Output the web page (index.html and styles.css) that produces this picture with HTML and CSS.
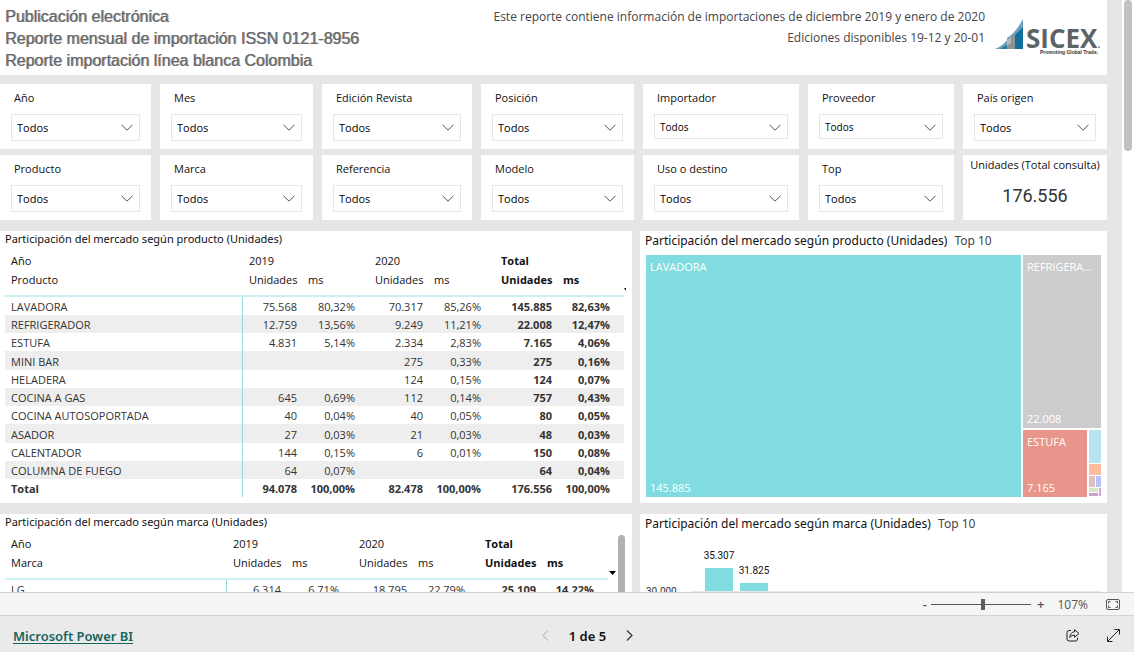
FILE: index.html
```html
<!DOCTYPE html>
<html lang="es">
<head>
<meta charset="utf-8">
<title>Reporte importación línea blanca Colombia</title>
<link rel="stylesheet" href="styles.css">
</head>
<body>
<svg class="defs" aria-hidden="true">
  <symbol id="chevron" viewBox="0 0 12 7"><path d="M0.5 0.8 6 6.2 11.5 0.8" fill="none" stroke="#555" stroke-width="1"/></symbol>
</svg>
<main class="viewport">
  <div class="report">
    <header class="head">
      <h1 class="head-title">Publicación electrónica<br>Reporte mensual de importación ISSN 0121-8956<br>Reporte importación línea blanca Colombia</h1>
      <p class="head-note">Este reporte contiene información de importaciones de diciembre 2019 y enero de 2020<br>Ediciones disponibles 19-12 y 20-01</p>
      <svg class="logo" viewBox="0 0 106 38" role="img" aria-label="SICEX Promoting Global Trade">
        <path d="M0 30 C5 28 9 25 13 20 V30Z" fill="#6f9cbf"/>
        <path d="M5 30 L13 25 V30Z" fill="#2b7aa2"/>
        <path d="M12 30 V19 C18 15 24 8 28 0 V30Z" fill="#6f9cbf"/>
        <path d="M12 21 L20 16 V30 H12Z" fill="#8c9196"/>
        <path d="M12 21 L16 18 V24 L12 27Z" fill="#b5b8bb"/>
        <path d="M20 16 L24 12 L28 8 V30 H20Z" fill="#146f9b"/>
        <text class="logo-name" x="31" y="29">SICEX</text>
        <circle cx="104" cy="28" r="1" fill="#8c9196"/>
        <text class="logo-tag" x="45" y="35">Promoting Global Trade.</text>
      </svg>
    </header>

    <section class="slicers">
      <div class="slicer"><label for="s1">Año</label><div class="pick"><select id="s1"><option>Todos</option></select><svg><use href="#chevron"/></svg></div></div>
      <div class="slicer"><label for="s2">Mes</label><div class="pick"><select id="s2"><option>Todos</option></select><svg><use href="#chevron"/></svg></div></div>
      <div class="slicer"><label for="s3">Edición Revista</label><div class="pick"><select id="s3"><option>Todos</option></select><svg><use href="#chevron"/></svg></div></div>
      <div class="slicer"><label for="s4">Posición</label><div class="pick"><select id="s4"><option>Todos</option></select><svg><use href="#chevron"/></svg></div></div>
      <div class="slicer"><label for="s5">Importador</label><div class="pick compact"><select id="s5"><option>Todos</option></select><svg><use href="#chevron"/></svg></div></div>
      <div class="slicer"><label for="s6">Proveedor</label><div class="pick compact"><select id="s6"><option>Todos</option></select><svg><use href="#chevron"/></svg></div></div>
      <div class="slicer"><label for="s7">País origen</label><div class="pick"><select id="s7"><option>Todos</option></select><svg><use href="#chevron"/></svg></div></div>
      <div class="slicer"><label for="s8">Producto</label><div class="pick"><select id="s8"><option>Todos</option></select><svg><use href="#chevron"/></svg></div></div>
      <div class="slicer"><label for="s9">Marca</label><div class="pick"><select id="s9"><option>Todos</option></select><svg><use href="#chevron"/></svg></div></div>
      <div class="slicer"><label for="s10">Referencia</label><div class="pick"><select id="s10"><option>Todos</option></select><svg><use href="#chevron"/></svg></div></div>
      <div class="slicer"><label for="s11">Modelo</label><div class="pick"><select id="s11"><option>Todos</option></select><svg><use href="#chevron"/></svg></div></div>
      <div class="slicer"><label for="s12">Uso o destino</label><div class="pick"><select id="s12"><option>Todos</option></select><svg><use href="#chevron"/></svg></div></div>
      <div class="slicer"><label for="s13">Top</label><div class="pick"><select id="s13"><option>Todos</option></select><svg><use href="#chevron"/></svg></div></div>
      <div class="card"><span class="card-label">Unidades (Total consulta)</span><strong class="card-value">176.556</strong></div>
    </section>

    <section class="panels">
      <article class="panel">
        <h2 class="panel-title">Participación del mercado según producto (Unidades)</h2>
        <div class="table-wrap">
        <table class="matrix">
          <colgroup><col><col class="c-unit"><col class="c-ms"><col class="c-unit"><col class="c-ms"><col class="c-total"><col class="c-ms"></colgroup>
          <thead>
            <tr><th>Año</th><th colspan="2">2019</th><th colspan="2">2020</th><th colspan="2" class="b">Total</th></tr>
            <tr><th>Producto</th><th>Unidades</th><th>ms</th><th>Unidades</th><th>ms</th><th class="b">Unidades</th><th class="b">ms</th></tr>
          </thead>
          <tbody>
            <tr><td>LAVADORA</td><td>75.568</td><td>80,32%</td><td>70.317</td><td>85,26%</td><td>145.885</td><td>82,63%</td></tr>
            <tr><td>REFRIGERADOR</td><td>12.759</td><td>13,56%</td><td>9.249</td><td>11,21%</td><td>22.008</td><td>12,47%</td></tr>
            <tr><td>ESTUFA</td><td>4.831</td><td>5,14%</td><td>2.334</td><td>2,83%</td><td>7.165</td><td>4,06%</td></tr>
            <tr><td>MINI BAR</td><td></td><td></td><td>275</td><td>0,33%</td><td>275</td><td>0,16%</td></tr>
            <tr><td>HELADERA</td><td></td><td></td><td>124</td><td>0,15%</td><td>124</td><td>0,07%</td></tr>
            <tr><td>COCINA A GAS</td><td>645</td><td>0,69%</td><td>112</td><td>0,14%</td><td>757</td><td>0,43%</td></tr>
            <tr><td>COCINA AUTOSOPORTADA</td><td>40</td><td>0,04%</td><td>40</td><td>0,05%</td><td>80</td><td>0,05%</td></tr>
            <tr><td>ASADOR</td><td>27</td><td>0,03%</td><td>21</td><td>0,03%</td><td>48</td><td>0,03%</td></tr>
            <tr><td>CALENTADOR</td><td>144</td><td>0,15%</td><td>6</td><td>0,01%</td><td>150</td><td>0,08%</td></tr>
            <tr><td>COLUMNA DE FUEGO</td><td>64</td><td>0,07%</td><td></td><td></td><td>64</td><td>0,04%</td></tr>
            <tr class="total"><td>Total</td><td>94.078</td><td>100,00%</td><td>82.478</td><td>100,00%</td><td>176.556</td><td>100,00%</td></tr>
          </tbody>
        </table>
        <div class="rail"><svg class="sort clipped" viewBox="0 0 2 3"><path d="M0 0H2V3Z"/></svg></div>
        </div>
      </article>

      <article class="panel">
        <h2 class="panel-title big">Participación del mercado según producto (Unidades) <span>Top 10</span></h2>
        <div class="treemap">
          <div class="tile t-lav"><span>LAVADORA</span><span>145.885</span></div>
          <div class="tree-side">
            <div class="tile t-ref"><span>REFRIGERA...</span><span>22.008</span></div>
            <div class="tree-low">
              <div class="tile t-est"><span>ESTUFA</span><span>7.165</span></div>
              <div class="tree-small">
                <i class="k1"></i><i class="k2"></i>
                <div class="pair"><i class="k3"></i><i class="k4"></i></div>
                <div class="tiny"><i class="k5"></i><i class="k6"></i><i class="k7"></i></div>
              </div>
            </div>
          </div>
        </div>
      </article>

      <article class="panel tall">
        <h2 class="panel-title">Participación del mercado según marca (Unidades)</h2>
        <div class="table-wrap">
        <table class="matrix">
          <colgroup><col><col class="c-unit"><col class="c-ms"><col class="c-unit"><col class="c-ms"><col class="c-total"><col class="c-ms"></colgroup>
          <thead>
            <tr><th>Año</th><th colspan="2">2019</th><th colspan="2">2020</th><th colspan="2" class="b">Total</th></tr>
            <tr><th>Marca</th><th>Unidades</th><th>ms</th><th>Unidades</th><th>ms</th><th class="b">Unidades</th><th class="b">ms</th></tr>
          </thead>
          <tbody>
            <tr><td>LG</td><td>6.314</td><td>6,71%</td><td>18.795</td><td>22,79%</td><td>25.109</td><td>14,22%</td></tr>
          </tbody>
        </table>
        <div class="rail wide"><svg class="sort" viewBox="0 0 7 4"><path d="M0 0H7L3.500 4Z"/></svg><div class="rail-thumb"></div></div>
        </div>
      </article>

      <article class="panel tall">
        <h2 class="panel-title big">Participación del mercado según marca (Unidades) <span>Top 10</span></h2>
        <div class="chart">
          <span class="tick">30.000</span>
          <div class="bars">
            <div class="bar"><span>35.307</span><i></i></div>
            <div class="bar second"><span>31.825</span><i></i></div>
          </div>
        </div>
      </article>
    </section>
  </div>
  <div class="scroll"><div class="scroll-thumb"></div></div>
</main>

<div class="zoombar">
  <button type="button" class="zoom-btn" aria-label="Alejar">-</button>
  <input type="range" class="zoom" min="0" max="100" value="52" aria-label="Zoom">
  <button type="button" class="zoom-btn" aria-label="Acercar">+</button>
  <span class="zoom-value">107%</span>
  <button type="button" class="fit" aria-label="Ajustar a la página"><svg width="14" height="11" viewBox="0 0 14 11" fill="none" stroke="#555"><rect x="0.5" y="0.5" width="13" height="10" rx="1.500"/><path d="M2.500 4.500V2.500H4.500M9.500 2.500H11.500V4.500M2.500 6.500V8.500H4.500M9.500 8.500H11.500V6.500"/></svg></button>
</div>

<footer class="foot">
  <a class="brand" href="#">Microsoft Power BI</a>
  <nav class="pager">
    <button type="button" aria-label="Anterior" disabled><svg width="7" height="11" viewBox="0 0 7 11" fill="none" stroke="#c4c4c4" stroke-width="1.200"><path d="M6 .5 1 5.500 6 10.500"/></svg></button>
    <span>1 de 5</span>
    <button type="button" aria-label="Siguiente"><svg width="7" height="11" viewBox="0 0 7 11" fill="none" stroke="#333" stroke-width="1.200"><path d="M1 .5 6 5.500 1 10.500"/></svg></button>
  </nav>
  <div class="tools">
    <button type="button" aria-label="Compartir"><svg width="14" height="13" viewBox="0 0 14 13" fill="none" stroke="#222" stroke-linejoin="round"><path d="M5 1.500H3A2 2 0 0 0 1 3.500V10A2 2 0 0 0 3 12H9.500A2 2 0 0 0 11.500 10V8.500"/><path d="M8.500 0.700 13 4.500 8.500 8.200V6.200C6.500 6.200 5 6.800 3.800 8.500 4 5.500 5.500 3 8.500 2.800Z"/></svg></button>
    <button type="button" aria-label="Pantalla completa"><svg width="13" height="13" viewBox="0 0 13 13" fill="none" stroke="#222"><path d="M.8 12.200 12.200.8M7.500.5H12.500V5.500M.5 7.500V12.500H5.500"/></svg></button>
  </div>
</footer>
</body>
</html>
```

FILE: styles.css
```css
* { box-sizing: border-box; }
body {
  margin: 0;
  height: 100vh;
  display: flex;
  flex-direction: column;
  font-family: "Open Sans", "Noto Sans", sans-serif;
  font-size: 11px;
  color: #111;
  background: #eaeaea;
}
h1, h2, p { margin: 0; font-weight: 400; }
button { border: 0; padding: 0; background: none; font: inherit; color: inherit; display: flex; align-items: center; }
.defs { display: none; }

.viewport { flex: 1; min-height: 0; display: flex; overflow: hidden; background: #fff; }
.report { flex: 1; background: #e6e6e6; padding-right: 15px; }
.scroll { width: 12px; padding: 0 2px; }
.scroll-thumb { height: 151px; border-radius: 4px; background: #c1c1c1; }

.head { display: flex; align-items: flex-start; height: 75px; padding: 6px 6px 0 5px; background: #fff; }
.head-title {
  flex: 1;
  font: 16px/22px "Liberation Sans", Arial, sans-serif;
  color: #666;
  text-shadow: 1px 0 0 rgba(102, 102, 102, 0.6);
}
.head-note { font-size: 12px; line-height: 21px; text-align: right; color: #444; }
.logo { width: 106px; height: 38px; margin: 13px 0 0 10px; }
.logo-name { font: 700 26px "Open Sans", sans-serif; fill: #5d6468; }
.logo-tag { font: 700 5px "Liberation Sans", sans-serif; fill: #333; }

.slicers {
  display: grid;
  grid-template-columns: 151fr 153fr 150fr 153fr 156fr 146fr 144fr;
  gap: 6px 9px;
  padding: 9px 0 11px;
}
.slicer, .card { background: #fff; height: 65px; min-width: 0; }
.slicer { padding: 6px 11px 0; }
.slicer label { display: block; padding-left: 3px; line-height: 16px; margin-bottom: 8px; }
.pick { position: relative; height: 27px; }
.pick.compact { height: 25px; font-size: 10px; }
.pick select {
  appearance: none;
  width: 100%;
  height: 100%;
  border: 1px solid #e6e6e6;
  border-radius: 0;
  background: #fff;
  padding: 0 20px 0 5px;
  font: inherit;
  color: #000;
}
.pick svg { position: absolute; right: 7px; top: 10px; width: 12px; height: 7px; pointer-events: none; }
.card { display: flex; flex-direction: column; align-items: center; padding-top: 2px; }
.card-label { line-height: 16px; white-space: nowrap; }
.card-value { margin-top: 11px; font: 400 18px/24px Roboto, sans-serif; color: #333; }

.panels { display: grid; grid-template-columns: 632fr 467fr; gap: 11px 8px; }
.panel { background: #fff; min-width: 0; padding-left: 5px; height: 272px; }
.panel.tall { height: 280px; }
.panel-title { font-family: "Noto Sans", sans-serif; font-size: 11px; line-height: 16px; height: 20px; white-space: nowrap; }
.panel-title.big { font-size: 12px; line-height: 20px; height: 24px; }
.panel-title.big span { color: #444; margin-left: 4px; }

.table-wrap { display: flex; align-items: flex-start; }
.matrix { flex: 1; width: 100%; table-layout: fixed; border-collapse: separate; border-spacing: 0; }
.c-unit { width: 59px; }
.c-ms { width: 67px; }
.c-total { width: 62px; }
.matrix th { height: 19px; padding: 0 0 0 6px; line-height: 19px; text-align: left; font-weight: 400; }
.matrix th.b { font-weight: 700; }
.matrix tr:last-child th { padding-bottom: 6px; border-bottom: 2px solid #c9f1f3; }
.matrix td { height: 18px; padding: 2px 14px 0 0; line-height: 16px; text-align: right; color: #333; white-space: nowrap; }
.matrix td:nth-child(2n) { padding-right: 5px; }
.matrix td:first-child { padding: 2px 0 0 6px; text-align: left; border-right: 1px solid #8fdde1; }
.matrix td:nth-child(n+6), .matrix .total td { font-weight: 700; }
.matrix tbody tr:nth-child(2n) td { background: #eee; }
.matrix tbody tr:nth-child(4n) td { height: 19px; }
.rail { width: 8px; display: flex; align-items: flex-start; }
.rail.wide { width: 24px; gap: 2px; padding-left: 1px; }
.sort { width: 7px; height: 4px; margin-top: 37px; }
.sort.clipped { width: 2px; height: 3px; }
.rail-thumb { width: 7px; height: 200px; margin-top: 1px; border-radius: 4px; background: #b3b0ad; }

.treemap { display: grid; grid-template-columns: minmax(0, 375fr) minmax(0, 78fr); gap: 2px; height: 242px; margin: 0 6px 0 1px; }
.tile { display: flex; flex-direction: column; justify-content: space-between; padding: 4px 0 1px 4px; line-height: 16px; color: #fff; white-space: nowrap; }
.t-lav { background: #80dce0; }
.tree-side { display: grid; grid-template-rows: 173fr 67fr; gap: 2px; }
.t-ref { background: #ccc; }
.tree-low { display: grid; grid-template-columns: minmax(0, 64fr) minmax(0, 12fr); gap: 2px; }
.t-est { background: #e8958c; }
.tree-small { display: grid; grid-template-rows: 33px 11px 11px 8px; gap: 1px; }
.pair { display: grid; grid-template-columns: 6px 1fr; gap: 1px; }
.tiny { display: grid; grid-template: 4px 3px / 1fr 2px; gap: 1px; }
.k1 { background: #b8e4f2; }
.k2 { background: #febd9f; }
.k3 { background: #dfbfbf; }
.k4 { background: #b6c3fb; }
.k5 { background: #cfeabb; }
.k6 { background: #dc9cf0; grid-row: span 2; }
.k7 { background: #c8a2c8; }

.chart { display: flex; align-items: flex-start; font: 10px/12px Roboto, sans-serif; margin: 0 6px 0 1px; }
.tick { width: 45px; margin-top: 48px; color: #333; }
.bars { flex: 1; display: flex; gap: 7px; height: 54px; padding: 12px 0 0 14px; border-bottom: 1px solid #e8e8e8; }
.bar { width: 28px; display: flex; flex-direction: column; align-items: center; gap: 6px; }
.bar.second { padding-top: 15px; }
.bar i { flex: 1; width: 100%; background: #80dce0; }

.zoombar { display: flex; align-items: center; justify-content: flex-end; height: 24px; padding-right: 14px; border: solid #d4d4d4; border-width: 1px 0; background: #f5f5f5; color: #555; font-size: 12px; }
.zoom-btn { font-size: 13px; font-weight: 600; line-height: 16px; }
.zoom { appearance: none; width: 100px; height: 12px; margin: 0 6px 0 4px; background: linear-gradient(#555, #555) center / 100% 1px no-repeat; }
.zoom::-webkit-slider-thumb { appearance: none; width: 4px; height: 11px; background: #605e5c; }
.zoom-value { margin: 0 18px 0 13px; }

.foot { display: grid; grid-template-columns: 1fr auto 1fr; align-items: center; height: 36px; padding: 3px 14px 0 13px; font-family: "Noto Sans", sans-serif; }
.brand { font-size: 13px; font-weight: 600; color: #17655c; text-underline-offset: 2px; justify-self: start; }
.pager { display: flex; align-items: center; gap: 20px; margin-left: 42px; font-size: 13px; font-weight: 600; }
.tools { display: flex; gap: 27px; justify-self: end; }
```
